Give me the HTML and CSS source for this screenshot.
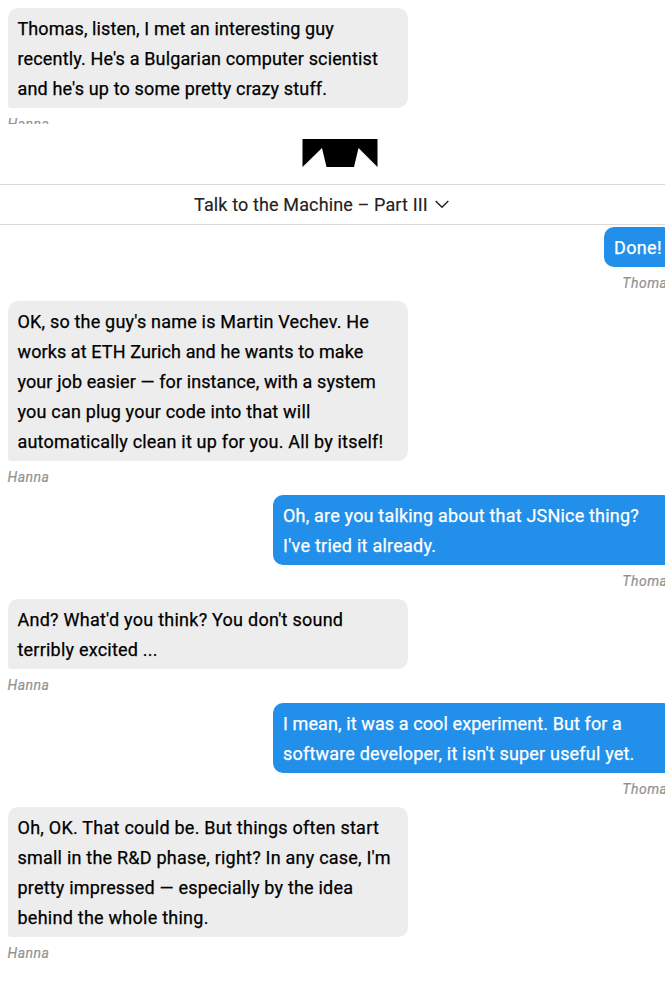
FILE: index.html
```html
<!DOCTYPE html>
<html lang="en">
<head>
<meta charset="utf-8">
<title>Talk to the Machine – Part III</title>
<link rel="stylesheet" href="styles.css">
</head>
<body>
<section class="thread thread-top">
  <div class="message"><p class="bubble"><span class="t10">Thomas, listen, I met an interesting guy</span><br><span class="t15">recently. He's a Bulgarian computer scientist</span><br><span class="t15">and he's up to some pretty crazy stuff.</span></p><span class="author">Hanna</span></div>
</section>
<header class="header">
  <svg class="logo" width="76" height="28" viewBox="-.5 0 76 28"><path d="M0 0H75V28L56 9L51.5 28H24L19.5 9L0 28Z"/></svg>
</header>
<nav class="chapter"><span class="t13">Talk to the Machine – Part III</span><svg class="chevron" width="14" height="9" viewBox="0 0 14 9"><path d="M.7 1L7 7.3L13.3 1"/></svg></nav>
<main class="thread">
  <div class="message own"><p class="bubble short">Done!</p><span class="author">Thomas</span></div>
  <div class="message"><p class="bubble"><span class="t19">OK, so the guy's name is Martin Vechev. He</span><br><span class="t10">works at ETH Zurich and he wants to make</span><br><span class="t10">your job easier — for instance, with a system</span><br><span class="t19">you can plug your code into that will</span><br><span class="t19">automatically clean it up for you. All by itself!</span></p><span class="author">Hanna</span></div>
  <div class="message own"><p class="bubble"><span class="t19">Oh, are you talking about that JSNice thing?</span><br><span class="t25">I've tried it already.</span></p><span class="author">Thomas</span></div>
  <div class="message"><p class="bubble"><span class="t25">And? What'd you think? You don't sound</span><br><span class="t22">terribly excited ...</span></p><span class="author">Hanna</span></div>
  <div class="message own"><p class="bubble"><span class="t10">I mean, it was a cool experiment. But for a</span><br><span class="t19">software developer, it isn't super useful yet.</span></p><span class="author">Thomas</span></div>
  <div class="message"><p class="bubble"><span class="t25">Oh, OK. That could be. But things often start</span><br><span class="t22">small in the R&amp;D phase, right? In any case, I'm</span><br><span class="t19">pretty impressed — especially by the idea</span><br><span class="t25">behind the whole thing.</span></p><span class="author">Hanna</span></div>
</main>
</body>
</html>
```
FILE: styles.css
```css
* { box-sizing: border-box; }
body {
  margin: 0;
  height: 982px;
  overflow: hidden;
  background: #fff;
  color: #000;
  font: 18px/30px Roboto, "Liberation Sans", sans-serif;
  letter-spacing: 0.35px;
}
.thread {
  width: 680.5px;
  padding: 2px 7.5px 0;
}
.thread-top {
  height: 124px;
  padding-top: 8px;
  overflow: hidden;
}
.message {
  display: flex;
  flex-direction: column;
  align-items: flex-start;
  margin-bottom: 8px;
}
.bubble {
  width: 400px;
  margin: 0;
  padding: 6px 0 4px 10px;
  border-radius: 10px 10px 10px 3px;
  background: #ededed;
  white-space: nowrap;
  -webkit-text-stroke: 0.25px currentColor;
}

/* tracking steps */
.t10 { letter-spacing: 0.1px; }
.t13 { letter-spacing: 0.13px; }
.t15 { letter-spacing: 0.15px; }
.t19 { letter-spacing: 0.19px; }
.t22 { letter-spacing: 0.22px; }
.t25 { letter-spacing: 0.25px; }

.author {
  height: 26px;
  padding-top: 1px;
  color: #929292;
  font-size: 14px;
  font-style: italic;
  line-height: 30px;
  letter-spacing: 0.5px;
  -webkit-text-stroke: 0.2px currentColor;
}
.own { align-items: flex-end; }
.own .bubble {
  border-radius: 10px 10px 3px 10px;
  background: #2290ea;
  color: #fff;
}
.own .short {
  width: 69px;
}
.own .author {
  margin-right: -2px;
}
.header {
  display: flex;
  justify-content: center;
  height: 60px;
  padding: 15px 0 0 15px;
  background: #fff;
}
.logo { display: block; }
.chapter {
  display: flex;
  align-items: center;
  justify-content: flex-start;
  gap: 7px;
  height: 41px;
  padding-left: 194px;
  border-top: 1px solid #d9d9d9;
  border-bottom: 1px solid #d9d9d9;
  color: #222;
  -webkit-text-stroke: 0.15px currentColor;
}
.chevron {
  fill: none;
  stroke: #222;
  stroke-width: 1.5;
}
```
